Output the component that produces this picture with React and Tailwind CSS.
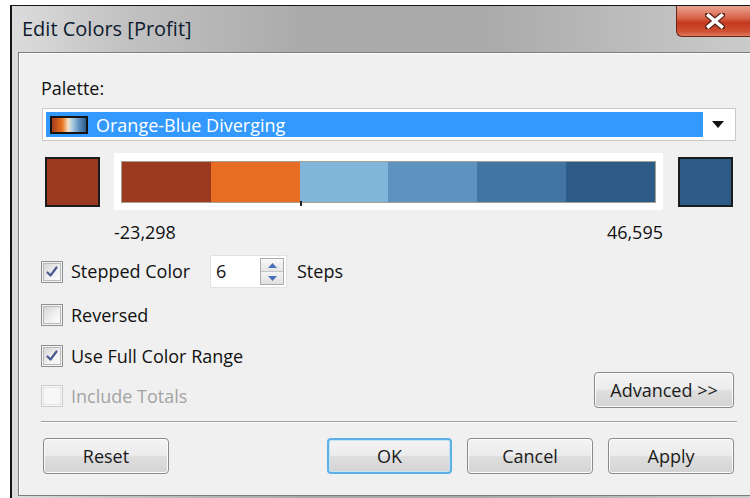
import React from 'react';

const steps = ['bg-[#9c3a21]', 'bg-[#e86d24]', 'bg-[#81b6da]', 'bg-[#5e92bf]', 'bg-[#4375a3]', 'bg-[#2c5b88]'];

function Checkbox({ checked, disabled }) {
  return (
    <span
      className={`w-[22px] h-[22px] shrink-0 border flex items-center justify-center ${
        disabled ? 'border-[#cdcdcd] bg-[#f6f6f6]' : 'border-[#8e8f8f] bg-[#f4f4f4]'
      }`}
    >
      <span
        className={`w-[18px] h-[18px] flex items-center justify-center ${
          disabled
            ? 'border border-[#e4e4e4] bg-[#f7f7f7]'
            : 'border border-[#b8b8b8] bg-[linear-gradient(135deg,#d6d6d6,#f2f2f2_60%,#fbfbfb)]'
        }`}
      >
        {checked && (
          <svg width="14" height="14" viewBox="0 0 14 14">
            <path d="M2.5 7.5 L5.5 10.5 L11.5 2.5" fill="none" stroke="#4b5b90" strokeWidth="2.2" strokeLinecap="round" strokeLinejoin="round" />
          </svg>
        )}
      </span>
    </span>
  );
}

function Button({ children, primary, className = '' }) {
  return (
    <button
      className={`h-[36px] rounded-[4px] text-[18px] leading-[22px] text-[#1b1b1b] bg-[linear-gradient(#f3f3f3_0%,#ececec_48%,#dedede_52%,#d4d4d4_100%)] ${
        primary
          ? 'border-2 border-[#5cb0e6] shadow-[inset_0_0_0_1px_#c4e4f7]'
          : 'border border-[#8a8a8a] shadow-[inset_0_0_0_1px_#fbfbfb]'
      } ${className}`}
    >
      {children}
    </button>
  );
}

function CloseGlyph() {
  return (
    <svg width="20" height="16" viewBox="0 0 20 16">
      <path d="M3 2 L17 14 M17 2 L3 14" stroke="#5a2418" strokeWidth="6" strokeLinecap="square" />
      <path d="M3.5 2.5 L16.5 13.5 M16.5 2.5 L3.5 13.5" stroke="#ffffff" strokeWidth="3.6" strokeLinecap="square" />
    </svg>
  );
}

export default function App() {
  return (
    <div className="w-[750px] h-[498px] bg-white overflow-hidden pt-[5px] pl-[10px] font-['Open_Sans',sans-serif] text-[#111]">
      <div className="h-[493px] border-l-2 border-t border-[#161616] flex flex-col bg-[linear-gradient(90deg,#dcdcdc_0%,#c2c2c2_15%,#aaaaaa_40%,#ababab_65%,#bdbdbd_85%,#cbcbcb_100%)]">
        {/* title bar */}
        <div className="h-[46px] shrink-0 flex items-start">
          <div className="pl-[10px] pt-[11px] text-[20px] leading-[24px] text-[#0c1a2e]">Edit Colors [Profit]</div>
          <div className="ml-auto w-[74px] h-[31px] rounded-bl-[6px] border-l border-b border-[#6b2419] bg-[linear-gradient(#e9a493_0%,#d9634a_40%,#c33a1f_55%,#cf5033_85%,#dd7a5e_100%)] flex items-center justify-center pl-[2px]">
            <CloseGlyph />
          </div>
        </div>

        {/* dialog body */}
        <div className="flex-1 pl-[6px] pb-[2px] flex">
          <div className="flex-1 border-l border-t border-b border-[#7d7d7d] bg-[#f0f0f0] shadow-[inset_1px_1px_0_#fdfdfd]">
            <div className="w-[696px] ml-[22px] pt-[25px] flex flex-col text-[18px]">
              <div className="leading-[20px]">Palette:</div>

              {/* palette select */}
              <div className="mt-[10px] ml-[1px] w-[694px] h-[33px] border border-[#c9c9c9] bg-white p-[3px] flex">
                <div className="w-[657px] h-[25px] bg-[#3399ff] flex items-center pl-[4px]">
                  <span className="w-[38px] h-[18px] border-2 border-[#141414] bg-[linear-gradient(90deg,#a23c1c_0%,#e8731f_30%,#f3e4c8_48%,#a9cbe3_60%,#5c8fbd_80%,#2f5e8c_100%)]" />
                  <span className="ml-[8px] text-white leading-[20px]">Orange-Blue Diverging</span>
                </div>
                <div className="flex-1 flex items-center justify-center">
                  <svg width="12" height="7" viewBox="0 0 12 7">
                    <path d="M0 0 H12 L6 7 Z" fill="#111" />
                  </svg>
                </div>
              </div>

              {/* stepped color ramp */}
              <div className="mt-[12px] pl-[4px] flex items-center">
                <span className="w-[55px] h-[50px] border-2 border-[#1c1c1c] bg-[#9c3a21]" />
                <div className="ml-[14px] w-[549px] h-[57px] bg-white pt-[8px] pb-[7px] px-[7px]">
                  <div className="relative h-full flex border border-[#a8a092]">
                    {steps.map((c) => (
                      <span key={c} className={`flex-1 ${c}`} />
                    ))}
                    <span className="absolute left-[33.33%] bottom-[-4px] w-[2px] h-[5px] bg-[#222]" />
                  </div>
                </div>
                <span className="ml-[15px] w-[55px] h-[50px] border-2 border-[#1c1c1c] bg-[#2c5b88]" />
              </div>

              <div className="mt-[12px] ml-[73px] w-[549px] flex justify-between leading-[20px]">
                <span>-23,298</span>
                <span>46,595</span>
              </div>

              {/* options */}
              <div className="mt-[13px] h-[33px] flex items-center">
                <Checkbox checked />
                <span className="ml-[8px] w-[139px]">Stepped Color</span>
                <div className="w-[77px] h-[33px] border border-[#e2e2e2] bg-white flex items-center pl-[5px] pr-[2px]">
                  <span className="flex-1">6</span>
                  <div className="w-[24px] h-[27px] border border-[#adadad] flex flex-col bg-[#f1f1f1]">
                    <span className="flex-1 flex items-center justify-center border-b border-[#c4c4c4] bg-[linear-gradient(#fafafa,#e6e6e6)]">
                      <svg width="9" height="5" viewBox="0 0 9 5"><path d="M0 5 L4.5 0 L9 5 Z" fill="#4a70b6" /></svg>
                    </span>
                    <span className="flex-1 flex items-center justify-center bg-[linear-gradient(#f4f4f4,#e0e0e0)]">
                      <svg width="9" height="5" viewBox="0 0 9 5"><path d="M0 0 L9 0 L4.5 5 Z" fill="#4a70b6" /></svg>
                    </span>
                  </div>
                </div>
                <span className="ml-[10px]">Steps</span>
              </div>

              <div className="mt-[16px] h-[22px] flex items-center">
                <Checkbox />
                <span className="ml-[8px]">Reversed</span>
              </div>

              <div className="mt-[19px] h-[22px] flex items-center">
                <Checkbox checked />
                <span className="ml-[8px]">Use Full Color Range</span>
              </div>

              <div className="mt-[5px] h-[36px] flex items-start">
                <div className="mt-[13px] h-[22px] flex items-center">
                  <Checkbox disabled />
                  <span className="ml-[8px] text-[#a3a3a3]">Include Totals</span>
                </div>
                <Button className="ml-auto mr-[3px] w-[140px]">Advanced &gt;&gt;</Button>
              </div>

              <div className="mt-[13px] border-t border-[#a0a0a0] border-b border-b-[#fbfbfb]" />

              <div className="mt-[15px] flex">
                <Button className="ml-[2px] w-[126px]">Reset</Button>
                <div className="ml-auto mr-[3px] flex gap-[15px]">
                  <Button primary className="w-[125px]">OK</Button>
                  <Button className="w-[126px]">Cancel</Button>
                  <Button className="w-[126px]">Apply</Button>
                </div>
              </div>
            </div>
          </div>
        </div>
      </div>
    </div>
  );
}
